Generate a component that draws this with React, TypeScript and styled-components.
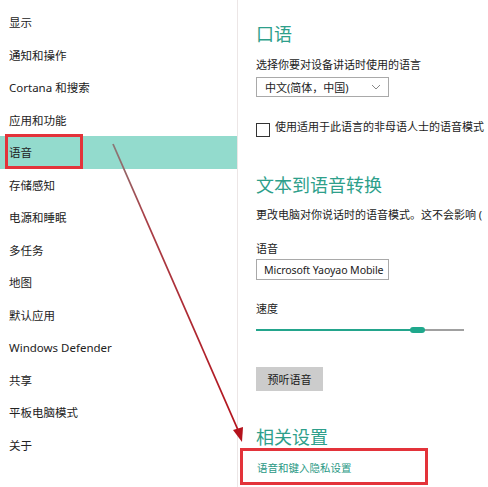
import React from "react";
import styled, { createGlobalStyle } from "styled-components";

const Global = createGlobalStyle`
  html, body { margin: 0; padding: 0; background: #ffffff; overflow: hidden; }
  body { font-family: "Noto Sans", "Noto Sans CJK SC", sans-serif; color: #1f1f1f; }
`;

const Page = styled.div`
  position: relative;
  display: flex;
  width: 488px;
  height: 487px;
  overflow: hidden;
  background: #fff;
`;

const Nav = styled.nav`
  width: 238px;
  flex: none;
  padding-top: 6px;
  border-right: 1px solid #ece6e6;
  box-sizing: border-box;
`;

const NavItem = styled.div<{ $active?: boolean }>`
  height: 32.5px;
  display: flex;
  align-items: center;
  padding-left: 9px;
  font-size: 11.5px;
  color: #222;
  background: ${(p) => (p.$active ? "#93dbcd" : "transparent")};
`;

const Content = styled.main`
  flex: 1;
  min-width: 0;
  padding: 22px 0 0 18px;
  white-space: nowrap;
`;

const Heading = styled.h2<{ $mt?: number }>`
  margin: ${(p) => p.$mt ?? 0}px 0 0;
  font-size: 18px;
  line-height: 24px;
  font-weight: 400;
  color: #2e9f8b;
`;

const Label = styled.div<{ $mt: number }>`
  margin-top: ${(p) => p.$mt}px;
  font-size: 11px;
  line-height: 16px;
  color: #222;
`;

const Select = styled.div`
  margin-top: 4px;
  width: 133px;
  height: 20px;
  box-sizing: border-box;
  border: 1px solid #a9a9a9;
  display: flex;
  align-items: center;
  justify-content: space-between;
  padding: 0 7px 0 8px;
  font-size: 11px;
  color: #222;
`;

const CheckRow = styled.label`
  margin-top: 24px;
  display: flex;
  align-items: flex-start;
  gap: 5px;
  font-size: 11px;
  line-height: 12px;
  color: #222;
`;

const Box = styled.span`
  width: 14px;
  height: 14px;
  margin-top: 2px;
  flex: none;
  box-sizing: border-box;
  border: 1.5px solid #333;
`;

const TextBox = styled.div`
  margin-top: 2px;
  width: 133px;
  height: 21px;
  box-sizing: border-box;
  border: 1px solid #a9a9a9;
  display: flex;
  align-items: center;
  padding-left: 7px;
  font-size: 10.6px;
  letter-spacing: -0.1px;
  color: #222;
`;

const Slider = styled.div`
  margin-top: 8px;
  width: 208px;
  height: 10px;
  position: relative;
  display: flex;
  align-items: center;
`;

const Track = styled.div`
  height: 2px;
  width: 100%;
  background: #a0a0a0;
`;

const Fill = styled.div`
  position: absolute;
  left: 0;
  top: 4px;
  height: 2px;
  background: #23a58c;
`;

const Thumb = styled.div`
  position: absolute;
  top: 2px;
  width: 15px;
  height: 6px;
  border-radius: 3px;
  background: #1fa88c;
`;

const Button = styled.div`
  margin-top: 32px;
  width: 67px;
  height: 24px;
  background: #cccccc;
  display: flex;
  align-items: center;
  justify-content: center;
  font-size: 11px;
  color: #1a1a1a;
`;

const Link = styled.div`
  margin-top: 11px;
  padding-left: 1px;
  font-size: 10.5px;
  line-height: 16px;
  color: #2a9985;
`;

const Annot = styled.div`
  position: absolute;
  box-sizing: border-box;
  border: 3px solid #e3333a;
  pointer-events: none;
`;

const Arrow = styled.svg`
  position: absolute;
  left: 0;
  top: 0;
  pointer-events: none;
`;

const navItems = [
  "显示",
  "通知和操作",
  "Cortana 和搜索",
  "应用和功能",
  "语音",
  "存储感知",
  "电源和睡眠",
  "多任务",
  "地图",
  "默认应用",
  "Windows Defender",
  "共享",
  "平板电脑模式",
  "关于",
];

export default function App() {
  const speed = 0.76;
  return (
    <>
      <Global />
      <Page>
        <Nav>
          {navItems.map((n) => (
            <NavItem key={n} $active={n === "语音"}>
              {n}
            </NavItem>
          ))}
        </Nav>
        <Content>
          <Heading>口语</Heading>
          <Label $mt={11}>选择你要对设备讲话时使用的语言</Label>
          <Select>
            <span>中文(简体，中国)</span>
            <svg width="10" height="6" viewBox="0 0 10 6">
              <path d="M1 1 L5 5 L9 1" fill="none" stroke="#888" strokeWidth="1" />
            </svg>
          </Select>
          <CheckRow>
            <Box />
            <span>使用适用于此语言的非母语人士的语音模式</span>
          </CheckRow>
          <Heading $mt={36}>文本到语音转换</Heading>
          <Label $mt={10}>更改电脑对你说话时的语音模式。这不会影响 (</Label>
          <Label $mt={18}>语音</Label>
          <TextBox>Microsoft Yaoyao Mobile</TextBox>
          <Label $mt={21}>速度</Label>
          <Slider>
            <Track />
            <Fill style={{ width: `${speed * 100}%` }} />
            <Thumb style={{ left: `${speed * 100 - 2}%` }} />
          </Slider>
          <Button>预听语音</Button>
          <Heading $mt={34}>相关设置</Heading>
          <Link>语音和键入隐私设置</Link>
        </Content>
        <Annot style={{ left: 5, top: 134, width: 78, height: 35 }} />
        <Annot style={{ left: 240, top: 448, width: 188, height: 37 }} />
        <Arrow width="488" height="487" viewBox="0 0 488 487">
          <defs>
            <linearGradient id="ag" x1="0" y1="0" x2="0" y2="1">
              <stop offset="0" stopColor="#8a7a78" />
              <stop offset="0.25" stopColor="#a84048" />
              <stop offset="1" stopColor="#b4121c" />
            </linearGradient>
          </defs>
          <line x1="113" y1="144" x2="238" y2="430" stroke="url(#ag)" strokeWidth="1.8" />
          <polygon points="242,442 233,430 243,427" fill="#b4121c" />
        </Arrow>
      </Page>
    </>
  );
}
